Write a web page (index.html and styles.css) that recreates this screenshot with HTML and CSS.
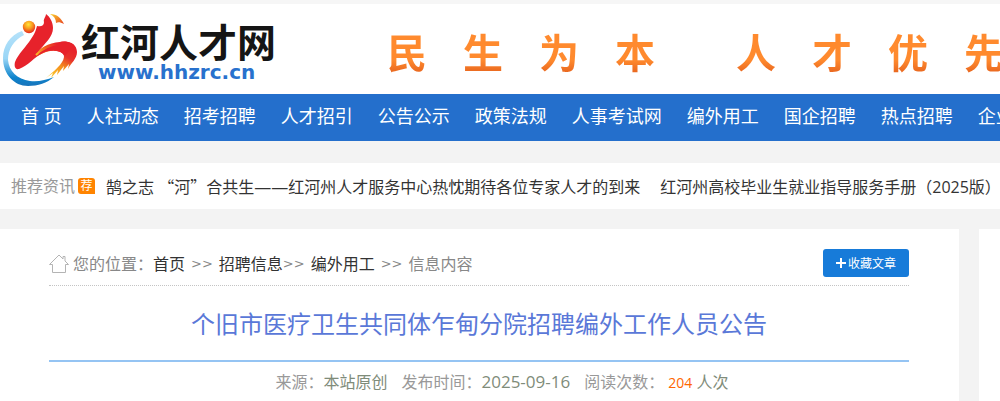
FILE: index.html
```
<!DOCTYPE html>
<html lang="zh-CN">
<head>
<meta charset="utf-8">
<title>个旧市医疗卫生共同体乍甸分院招聘编外工作人员公告</title>
<link rel="stylesheet" href="styles.css">
</head>
<body>
<header class="header">
  <a class="logo" href="#">
    <svg class="logo-mark" viewBox="3 14 76 73" width="76" height="73" aria-hidden="true">
      <defs>
        <linearGradient id="ring" x1="0" y1="0" x2="0" y2="1"><stop offset="0" stop-color="#b5e2fa"/><stop offset=".5" stop-color="#9ad6f6"/><stop offset=".85" stop-color="#0b83cc"/><stop offset="1" stop-color="#1a74ba"/></linearGradient>
        <linearGradient id="wing" gradientUnits="userSpaceOnUse" x1="71" y1="48" x2="54" y2="77"><stop offset="0" stop-color="#e7222b"/><stop offset=".3" stop-color="#e7322b"/><stop offset=".6" stop-color="#f48a1d"/><stop offset="1" stop-color="#fbc52a"/></linearGradient>
        <linearGradient id="fold" gradientUnits="userSpaceOnUse" x1="36" y1="56" x2="58" y2="46"><stop offset="0" stop-color="#fbc02a"/><stop offset=".5" stop-color="#f0601f"/><stop offset="1" stop-color="#e7222b"/></linearGradient>
        <linearGradient id="tip" x1="0" y1="0" x2="1" y2="1"><stop offset="0" stop-color="#fbd02b"/><stop offset="1" stop-color="#e8401f"/></linearGradient>
        <radialGradient id="sun" cx=".45" cy=".3" r=".7"><stop offset="0" stop-color="#ffe63a"/><stop offset=".5" stop-color="#f8951d"/><stop offset="1" stop-color="#e5271f"/></radialGradient>
      </defs>
      <path fill="url(#ring)" d="M22 31C10 35 3 46 3 58c0 16 11 28 25 28 10 0 19-3 26-9-8 3-16 5-24 4C17 79 9 71 8 60 8 49 14 40 24 35z"/>
      <circle cx="29" cy="27" r="6.200" fill="url(#sun)"/>
      <path fill="url(#wing)" d="M60 42c9-2 17 2 17 10 0 7-6 11-9 17l1-5-6 7 1-5-7 9 1-5-7 8 2-5-7 5c8-7 17-14 18-21 0-5-4-6-10-6z"/>
      <path fill="url(#fold)" d="M33 57c6-9 15-14 27-15 5-1 8 0 10 1l-6 12c-4-5-11-5-18-3-5 2-9 4-14 7z"/>
      <path fill="#e7222b" d="M46 14c4 3 7 8 7 14 0 9-8 15-16 25 5-2 9-5 14-8 8-3 18-4 23 0l-9 11c-4-6-13-7-22-3-9 4-15 13-24 16-4 1-5-3-4-7 3-8 11-15 16-23 5-7 5-10 6-13 4 1 7 0 7-4-1-3 2-5 2-8z"/>
      <path fill="none" stroke="url(#fold)" stroke-width="2" d="M36 55c6-6 13-10 22-11"/>
      <path fill="url(#tip)" d="M50 14c7 0 11 4 14 10-4-2-6-2-8-1 0-4-2-7-6-9z"/>
    </svg>
    <span class="logo-text"><strong class="logo-name">红河人才网</strong><span class="logo-url">www.hhzrc.cn</span></span>
  </a>
  <p class="slogan">
    <span class="slogan-part"><span>民</span><span>生</span><span>为</span><span>本</span></span>
    <span class="slogan-part"><span>人</span><span>才</span><span>优</span><span>先</span></span>
  </p>
</header>

<nav class="nav">
  <a href="#">首 页</a><a href="#">人社动态</a><a href="#">招考招聘</a><a href="#">人才招引</a><a href="#">公告公示</a><a href="#">政策法规</a><a href="#">人事考试网</a><a href="#">编外用工</a><a href="#">国企招聘</a><a href="#">热点招聘</a><a href="#">企业招聘</a>
</nav>

<section class="news">
  <span class="news-label">推荐资讯</span>
  <span class="news-badge">荐</span>
  <div class="news-list">
    <a href="#">鹄之志 <span class="cjk">“河”</span>合共生<span class="dash">——</span>红河州人才服务中心热忱期待各位专家人才的到来</a>
    <a href="#">红河州高校毕业生就业指导服务手册（2025版）</a>
  </div>
</section>

<div class="columns">
  <main class="article">
    <div class="article-bar">
      <svg class="home" viewBox="0 0 20 19" width="20" height="19" fill="none" stroke="#b4b4b4" aria-hidden="true"><path d="M.5 10.500 10 1l4 4V2.500h2V7l3.500 3.500H16.500v8h-13v-8z"/></svg>
      <div class="crumbs">
        <span>您的位置：</span><a href="#">首页</a><span class="sep">&gt;&gt;</span><a href="#">招聘信息</a><span class="sep tight">&gt;&gt;</span><a href="#">编外用工</a><span class="sep">&gt;&gt;</span><span>信息内容</span>
      </div>
      <button class="fav" type="button"><svg width="10" height="10" viewBox="0 0 10 10" aria-hidden="true"><path fill="#fff" d="M4 0h2v4h4v2H6v4H4V6H0V4h4z"/></svg>收藏文章</button>
    </div>
    <h1 class="title">个旧市医疗卫生共同体乍甸分院招聘编外工作人员公告</h1>
    <p class="meta">
      <span>来源：<b>本站原创</b></span>
      <span>发布时间：<b class="date">2025-09-16</b></span>
      <span>阅读次数： <em>204</em> <b>人次</b></span>
    </p>
  </main>
  <aside class="side"></aside>
</div>
</body>
</html>
```
FILE: styles.css
```
* { box-sizing: border-box; }
body {
  margin: 0;
  background: #f3f3f3;
  color: #888;
  font: 16px/24px "Open Sans", "Noto Sans CJK SC", sans-serif;
  overflow-x: hidden;
}
a { color: inherit; text-decoration: none; }
p, h1 { margin: 0; }

.header {
  display: flex;
  align-items: flex-start;
  height: 94px;
  border-top: 4px solid #f6f6f6;
  background: #fff;
  overflow: hidden;
}
.logo { display: flex; flex: none; width: 387px; padding: 10px 0 0 3px; gap: 2px; }
.logo-mark { flex: none; }
.logo-text { display: flex; flex-direction: column; }
.logo-name {
  color: #151515;
  font: 700 39px/44px "Noto Sans CJK SC", sans-serif;
  padding-top: 4px;
}
.logo-url {
  color: #2871cd;
  font: 700 20px/20px "DejaVu Sans", sans-serif;
  padding-left: 17px;
}
.slogan { display: flex; flex: none; gap: 81px; padding-top: 17px; }
.slogan-part { display: flex; gap: 36px; }
.slogan-part span {
  font: 700 40px/60px "Noto Sans CJK SC", sans-serif;
  background: linear-gradient(#ff8a2e 65%, #e4601c 90%);
  -webkit-background-clip: text;
  background-clip: text;
  color: transparent;
}

.nav {
  display: flex;
  gap: 25px;
  padding: 0 21px;
  background: #246fcc;
  color: #fff;
  font-size: 18px;
  line-height: 45px;
  height: 47px;
  white-space: nowrap;
  overflow: hidden;
}
.nav a { flex: none; }

.news {
  display: flex;
  align-items: center;
  margin: 22px 0 20px;
  padding: 0 0 0 11px;
  height: 46px;
  background: #fff;
  white-space: nowrap;
  overflow: hidden;
}
.news-label { color: #999; }
.news-badge {
  flex: none;
  margin: 0 11px 0 3px;
  width: 17px;
  border-radius: 3px 3px 0 3px;
  background: #ff8400;
  color: #fff;
  font-size: 12px;
  line-height: 16px;
  text-align: center;
}
.news-list { display: flex; align-items: baseline; gap: 20px; padding-top: 2px; color: #333; }
.cjk { font-family: "Noto Sans CJK SC", sans-serif; line-height: 1; }
.dash { font-size: 17px; line-height: 1; }

.columns { display: flex; gap: 20px; min-height: 172px; }
.article { flex: 1; min-width: 0; padding: 0 50px 8px 49px; background: #fff; }
.side { flex: 0 0 21px; background: #fff; }

.article-bar {
  display: flex;
  align-items: center;
  padding: 20px 0 8px;
  border-bottom: 1px dotted #c4c4c4;
}
.home { flex: none; margin-right: 4px; }
.crumbs { display: flex; flex: 1; white-space: nowrap; padding-top: 2px; }
.crumbs a { color: #333; }
.sep { padding: 0 6px; font-family: "DejaVu Sans", sans-serif; font-size: 13px; }
.sep.tight { padding-left: 0; }
.fav {
  display: flex;
  align-items: center;
  justify-content: center;
  gap: 2px;
  width: 86px;
  height: 28px;
  padding: 0;
  border: 0;
  border-radius: 3px;
  background: #177bd9;
  color: #fff;
  font: 12px/28px "Noto Sans CJK SC", sans-serif;
}

.title {
  padding: 20px 0 18px;
  border-bottom: 2px solid #95c4f3;
  color: #5a78d8;
  font-size: 24px;
  font-weight: 400;
  line-height: 36px;
  text-align: center;
}
.meta {
  display: flex;
  justify-content: center;
  gap: 14px;
  padding: 8px 0 0 46px;
  color: #999;
}
.meta b { font-weight: 400; color: #7f8c7a; }
.meta .date { font-size: 17px; line-height: 1; }
.meta em { font-style: normal; font-size: 14px; color: #ff6600; }
```
